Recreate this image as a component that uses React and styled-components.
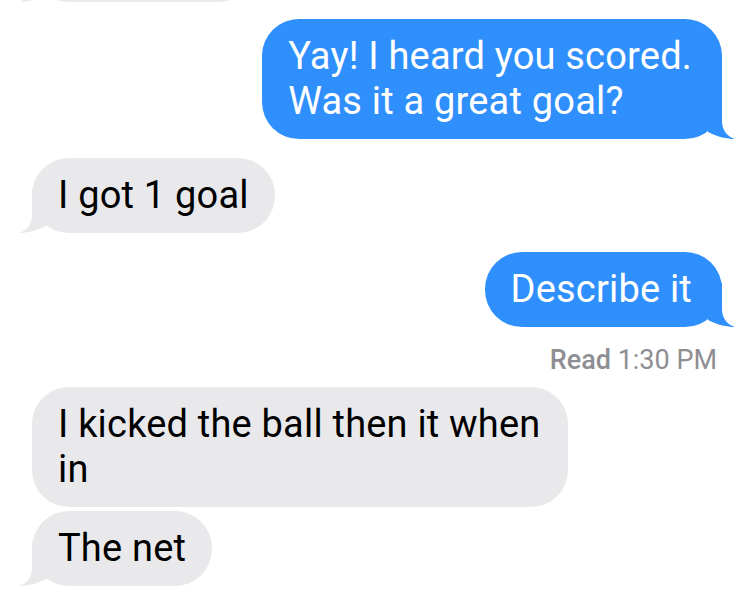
import React from "react";
import styled, { createGlobalStyle } from "styled-components";

const Global = createGlobalStyle`
  html, body { margin: 0; padding: 0; background: #ffffff; }
  body { font-family: Roboto, "Liberation Sans", sans-serif; overflow: hidden; }
`;

const Thread = styled.div`
  display: flex;
  flex-direction: column;
  padding: 0 28px 0 32px;
  width: 750px;
  box-sizing: border-box;
`;

const Row = styled.div`
  display: flex;
  justify-content: ${(p) => (p.$me ? "flex-end" : "flex-start")};
  margin-top: ${(p) => p.$gap}px;
`;

const Bubble = styled.div`
  position: relative;
  box-sizing: border-box;
  max-width: 536px;
  min-height: 75px;
  padding: 15px ${(p) => (p.$me ? 30 : 26)}px 15px 26px;
  border-radius: 37px;
  background: ${(p) => (p.$me ? "#2f8ffc" : "#e9e9eb")};
  color: ${(p) => (p.$me ? "#ffffff" : "#000000")};
  font-size: 38px;
  line-height: 45px;
  letter-spacing: 0.2px;
  white-space: pre-line;
`;

const TailSvg = styled.svg`
  position: absolute;
  bottom: 0;
  ${(p) => (p.$me ? "right: -16px;" : "left: -16px;")}
  width: 36px;
  height: 44px;
  ${(p) => (p.$me ? "" : "transform: scaleX(-1);")}
`;

const Tail = ({ me }) => (
  <TailSvg $me={me} viewBox="-20 -44 36 44" aria-hidden="true">
    <path
      d="M -14 -44 L 0 -44 L 0 -18 C 0 -8 6 -2 13 0 C 5 0 -4 -2 -14 -7 Z"
      fill={me ? "#2f8ffc" : "#e9e9eb"}
    />
  </TailSvg>
);

const Receipt = styled.div`
  align-self: flex-end;
  margin: 17px 5px 0 0;
  font-size: 27px;
  line-height: 32px;
  color: #8e8e93;
`;

const ReceiptLabel = styled.span`
  font-weight: 500;
`;

const Ghost = styled(Bubble)`
  width: 223px;
`;

export default function App() {
  return (
    <>
      <Global />
      <Thread>
        <Row $gap={-73}>
          <Ghost aria-hidden="true">
            <Tail />
          </Ghost>
        </Row>
        <Row $me $gap={17}>
          <Bubble $me>
            {"Yay! I heard you scored.\nWas it a great goal?"}
            <Tail me />
          </Bubble>
        </Row>
        <Row $gap={19}>
          <Bubble>
            I got 1 goal
            <Tail />
          </Bubble>
        </Row>
        <Row $me $gap={19}>
          <Bubble $me>
            Describe it
            <Tail me />
          </Bubble>
        </Row>
        <Receipt>
          <ReceiptLabel>Read</ReceiptLabel> 1:30 PM
        </Receipt>
        <Row $gap={11}>
          <Bubble>I kicked the ball then it when in</Bubble>
        </Row>
        <Row $gap={4}>
          <Bubble>
            The net
            <Tail />
          </Bubble>
        </Row>
      </Thread>
    </>
  );
}
